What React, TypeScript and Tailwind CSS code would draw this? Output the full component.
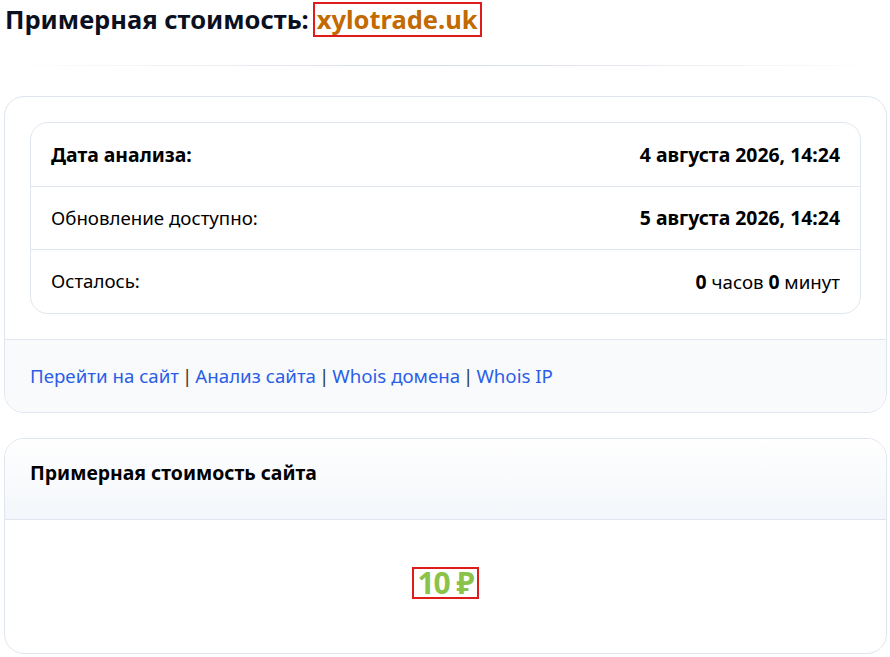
export default function App() {
  const rows = [
    { label: "Дата анализа:", bold: true, value: <b>4 августа 2026, 14:24</b> },
    { label: "Обновление доступно:", bold: false, value: <b>5 августа 2026, 14:24</b> },
    {
      label: "Осталось:",
      bold: false,
      value: (
        <span>
          <b>0</b> часов <b>0</b> минут
        </span>
      ),
    },
  ];

  return (
    <div className="min-h-screen bg-white font-['Noto_Sans',sans-serif] text-black">
      <div className="pl-[4px] pr-[3px]">
        <h1 className="flex h-[39px] items-center pl-[1px] text-[25.5px] font-bold text-[#0b1020]">
          Примерная стоимость:
          <span className="ml-[4px] border-2 border-[#e01b1b] px-[2px] leading-[31px] text-[#c26a00]">
            xylotrade.uk
          </span>
        </h1>

        <div className="mt-[26px] h-px bg-gradient-to-r from-transparent via-[#d5dce6] to-transparent" />

        <div className="mt-[30px] overflow-hidden rounded-[20px] border border-[#dfe6ef]">
          <div className="p-[25px]">
            <div className="overflow-hidden rounded-[18px] border border-[#dfe6ef]">
              {rows.map((r, i) => (
                <div
                  key={i}
                  className={`flex items-center justify-between px-[20px] text-[18.7px] ${
                    i > 0 ? "border-t border-[#dfe6ef]" : ""
                  } ${i === 2 ? "h-[64px]" : "h-[63px]"}`}
                >
                  <span className={r.bold ? "text-[19.4px] font-bold" : ""}>{r.label}</span>
                  <span className="[&_b]:text-[19.4px]">{r.value}</span>
                </div>
              ))}
            </div>
          </div>
          <div className="flex h-[73px] items-center border-t border-[#dfe6ef] bg-[#f8fafc] px-[25px] text-[18.7px]">
            <a className="text-[#2b5ee8]">Перейти на сайт</a>
            <span className="mx-[3px] text-[#333]">|</span>
            <a className="text-[#2b5ee8]">Анализ сайта</a>
            <span className="mx-[3px] text-[#333]">|</span>
            <a className="text-[#2b5ee8]">Whois домена</a>
            <span className="mx-[3px] text-[#333]">|</span>
            <a className="text-[#2b5ee8]">Whois IP</a>
          </div>
        </div>

        <div className="mt-[25px] overflow-hidden rounded-[20px] border border-[#dfe6ef]">
          <div className="flex h-[81px] items-center border-b border-[#dfe6ef] bg-gradient-to-b from-white to-[#f3f6fa] px-[25px] pb-[12px]">
            <h2 className="text-[19.4px] font-bold">Примерная стоимость сайта</h2>
          </div>
          <div className="flex h-[133px] items-center justify-center pb-[8px]">
            <span className="border-2 border-[#e01b1b] px-[3px] text-[30px] font-bold leading-[28px] tracking-[-1px] text-[#8bc34a]">
              10 ₽
            </span>
          </div>
        </div>
      </div>
    </div>
  );
}
